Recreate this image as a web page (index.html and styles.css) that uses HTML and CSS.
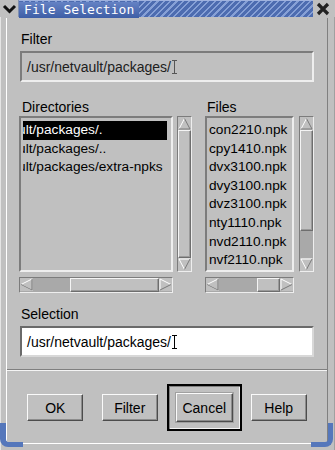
FILE: index.html
```html
<!DOCTYPE html>
<html lang="en">
<head>
    <meta charset="UTF-8">
    <title>File Selection</title>
    <link rel="stylesheet" href="styles.css">
</head>
<body>

    <div class="window">
        <div class="titlebar">
            <div class="tb-menu">
                <svg width="19" height="17" viewBox="0 0 19 17"><polyline points="4,6 9.5,11.5 15,6" fill="none" stroke="#111" stroke-width="3"/></svg>
            </div>
            <div class="tb-title"><span class="tb-text">File Selection</span></div>
            <div class="tb-close">
                <svg width="22" height="17" viewBox="0 0 22 17"><path d="M5,4 L15,14 M15,4 L5,14" stroke="#222" stroke-width="3.2"/></svg>
            </div>
        </div>

        <div class="frame">
            <div class="client">
                <div class="work">
                    <div class="label">Filter</div>
                    <div class="entry entry-filter">/usr/netvault/packages/<span class="ibeam ibeam-dotted"></span></div>

                    <div class="lists">
                        <div class="pane pane-dirs">
                            <div class="label">Directories</div>
                            <div class="pane-grid">
                                <div class="listbox">
                                    <div class="row row-dir selected"><span>/usr/netvault/packages/.</span></div>
                                    <div class="row row-dir"><span>/usr/netvault/packages/..</span></div>
                                    <div class="row row-dir"><span>/usr/netvault/packages/extra-npks</span></div>
                                </div>
                                <div class="vscroll">
                                    <div class="arrow"><svg width="13" height="13" viewBox="0 0 13 13"><polygon points="6.5,1.5 12,12 1,12" fill="#c0c0c0"/><polyline points="1,12 6.5,1.5" stroke="#fff" fill="none"/><polyline points="6.5,1.5 12,12 1,12" stroke="#7a7a7a" fill="none"/></svg></div>
                                    <div class="slider slider-fill"></div>
                                    <div class="arrow"><svg width="13" height="13" viewBox="0 0 13 13"><polygon points="1,1 12,1 6.5,11.5" fill="#c0c0c0"/><polyline points="6.5,11.5 1,1 12,1" stroke="#fff" fill="none"/><polyline points="12,1 6.5,11.5" stroke="#7a7a7a" fill="none"/></svg></div>
                                </div>
                                <div class="hscroll">
                                    <div class="arrow"><svg width="13" height="13" viewBox="0 0 13 13"><polygon points="1,6.5 12,1 12,12" fill="#c0c0c0"/><polyline points="12,12 1,6.5 12,1" stroke="#fff" fill="none"/><polyline points="12,1 12,12 1,6.5" stroke="#7a7a7a" fill="none"/></svg></div>
                                    <div class="trough" style="width: 37px;"></div>
                                    <div class="slider slider-fill"></div>
                                    <div class="arrow"><svg width="13" height="13" viewBox="0 0 13 13"><polygon points="1,1 12,6.5 1,12" fill="#c0c0c0"/><polyline points="1,12 1,1 12,6.5" stroke="#fff" fill="none"/><polyline points="12,6.5 1,12" stroke="#7a7a7a" fill="none"/></svg></div>
                                </div>
                            </div>
                        </div>

                        <div class="pane pane-files">
                            <div class="label">Files</div>
                            <div class="pane-grid">
                                <div class="listbox">
                                    <div class="row">con2210.npk</div>
                                    <div class="row">cpy1410.npk</div>
                                    <div class="row">dvx3100.npk</div>
                                    <div class="row">dvy3100.npk</div>
                                    <div class="row">dvz3100.npk</div>
                                    <div class="row">nty1110.npk</div>
                                    <div class="row">nvd2110.npk</div>
                                    <div class="row">nvf2110.npk</div>
                                </div>
                                <div class="vscroll">
                                    <div class="arrow"><svg width="13" height="13" viewBox="0 0 13 13"><polygon points="6.5,1.5 12,12 1,12" fill="#c0c0c0"/><polyline points="1,12 6.5,1.5" stroke="#fff" fill="none"/><polyline points="6.5,1.5 12,12 1,12" stroke="#7a7a7a" fill="none"/></svg></div>
                                    <div class="slider" style="height: 101px;"></div>
                                    <div class="trough trough-fill"></div>
                                    <div class="arrow"><svg width="13" height="13" viewBox="0 0 13 13"><polygon points="1,1 12,1 6.5,11.5" fill="#c0c0c0"/><polyline points="6.5,11.5 1,1 12,1" stroke="#fff" fill="none"/><polyline points="12,1 6.5,11.5" stroke="#7a7a7a" fill="none"/></svg></div>
                                </div>
                                <div class="hscroll">
                                    <div class="arrow"><svg width="13" height="13" viewBox="0 0 13 13"><polygon points="1,6.5 12,1 12,12" fill="#c0c0c0"/><polyline points="12,12 1,6.5 12,1" stroke="#fff" fill="none"/><polyline points="12,1 12,12 1,6.5" stroke="#7a7a7a" fill="none"/></svg></div>
                                    <div class="trough" style="width: 38px;"></div>
                                    <div class="slider slider-fill"></div>
                                    <div class="arrow"><svg width="13" height="13" viewBox="0 0 13 13"><polygon points="1,1 12,6.5 1,12" fill="#c0c0c0"/><polyline points="1,12 1,1 12,6.5" stroke="#fff" fill="none"/><polyline points="12,6.5 1,12" stroke="#7a7a7a" fill="none"/></svg></div>
                                </div>
                            </div>
                        </div>
                    </div>

                    <div class="label label-selection">Selection</div>
                    <div class="entry entry-selection">/usr/netvault/packages/<span class="ibeam"></span></div>
                </div>

                <div class="separator"></div>

                <div class="buttons">
                    <button class="btn">OK</button>
                    <button class="btn">Filter</button>
                    <div class="default-ring"><button class="btn btn-default">Cancel</button></div>
                    <button class="btn">Help</button>
                </div>
            </div>
        </div>
    </div>

</body>
</html>
```

FILE: styles.css
```css
body {
    margin: 0;
    background-color: #c0c0c0;
    font-family: "Liberation Sans", Arial, sans-serif;
    font-size: 14px;
    color: #000;
}

.window {
    position: relative;
    width: 335px;
    height: 450px;
    background-color: #c0c0c0;
    overflow: hidden;
}

/* corner handles of the window frame */
.window::before, .window::after {
    content: "";
    position: absolute;
    bottom: 3px;
    width: 17px;
    height: 19px;
    border-bottom: 5px solid #5577bb;
}

.window::before {
    left: 0;
    border-left: 6px solid #5577bb;
    border-bottom-left-radius: 8px;
}

.window::after {
    right: 2px;
    border-right: 5px solid #5577bb;
    border-bottom-right-radius: 8px;
}

/* title bar */
.titlebar {
    display: flex;
    height: 17px;
}

.tb-menu {
    width: 19px;
    background-color: #c0c0c0;
    border-right: 1px solid #8090b0;
    box-sizing: border-box;
}

.tb-menu svg, .tb-close svg {
    display: block;
}

.tb-title {
    flex: 1;
    background-color: #4d6cb0;
    background-image: repeating-linear-gradient(135deg, #4d6cb0 0, #4d6cb0 3px, #86a0d6 3px, #86a0d6 4.5px);
    border-top: 1px solid #9fb2de;
    box-sizing: border-box;
}

.tb-text {
    display: inline-block;
    height: 16px;
    padding: 0 5px 0 5px;
    background: linear-gradient(#6582c4, #3e5ea6);
    color: #fff;
    font-family: "DejaVu Sans Mono", monospace;
    font-size: 13px;
    line-height: 16px;
    letter-spacing: 0.05px;
}

.tb-close {
    width: 22px;
    background-color: #c0c0c0;
}

/* frame + client area */
.frame {
    height: 433px;
    box-sizing: border-box;
    padding: 1px 6px 6px 5px;
    border-left: 1px solid #e4e4e4;
    border-right: 1px solid #a0a0a0;
}

.client {
    height: 100%;
    box-sizing: border-box;
    border-left: 1px solid #fff;
    border-bottom: 1px solid #fff;
    border-right: 1px solid #808080;
}

.work {
    padding: 13px 13px 0 13px;
}

.label {
    line-height: 16px;
    padding-left: 1px;
}

.label-selection {
    margin-top: 13px;
}

.entry {
    margin-top: 4px;
    height: 31px;
    box-sizing: border-box;
    border: 2px solid;
    border-color: #7c7c7c #eeeeee #eeeeee #7c7c7c;
    padding-left: 5px;
    display: flex;
    align-items: center;
    white-space: nowrap;
}

.entry-filter {
    background-color: #c0c0c0;
    color: #202020;
}

.entry-selection {
    background-color: #fff;
    border-color: #6a6a6a #d8d8d8 #d8d8d8 #6a6a6a;
}

.ibeam {
    display: inline-block;
    width: 5px;
    height: 14px;
    margin-left: 1px;
    background:
        linear-gradient(#000, #000) center / 1px 100% no-repeat,
        linear-gradient(#000, #000) top / 5px 1px no-repeat,
        linear-gradient(#000, #000) bottom / 5px 1px no-repeat;
}

.ibeam-dotted {
    opacity: 0.55;
}

.lists {
    display: flex;
    margin-top: 17px;
    margin-left: -1px;
}

.pane-dirs {
    width: 173px;
}

.pane-dirs .label {
    padding-left: 3px;
}

.pane-files {
    width: 109px;
    margin-left: 13px;
}

.pane-files .label {
    padding-left: 2px;
}

.pane-grid {
    display: grid;
    grid-template-rows: 156px 16px;
    row-gap: 5px;
    margin-top: 1px;
}

.pane-dirs .pane-grid {
    grid-template-columns: 154px 15px;
    column-gap: 4px;
}

.pane-files .pane-grid {
    grid-template-columns: 89px 15px;
    column-gap: 5px;
}

.listbox {
    box-sizing: border-box;
    border: 2px solid;
    border-color: #7c7c7c #eeeeee #eeeeee #7c7c7c;
    padding: 3px 4px 0 2px;
    overflow: hidden;
}

.row {
    height: 18.6px;
    line-height: 18.6px;
    font-size: 13.7px;
    white-space: nowrap;
    overflow: hidden;
}

.row-dir span {
    margin-left: -65px;
}

.row.selected {
    background-color: #000;
    color: #fff;
}

/* scrollbars */
.vscroll, .hscroll {
    display: flex;
    box-sizing: border-box;
    border: 1px solid;
    border-color: #7c7c7c #eeeeee #eeeeee #7c7c7c;
    background-color: #a9a9a9;
}

.vscroll {
    flex-direction: column;
}

.arrow {
    flex: none;
    width: 13px;
    height: 13px;
    background-color: #c0c0c0;
}

.arrow svg {
    display: block;
}

.slider {
    box-sizing: border-box;
    background-color: #c0c0c0;
    border: 1px solid;
    border-color: #f4f4f4 #6e6e6e #6e6e6e #f4f4f4;
    box-shadow: inset -1px -1px #9a9a9a;
}

.slider-fill {
    flex: 1;
}

.trough {
    flex: none;
}

.trough-fill {
    flex: 1;
}

.separator {
    margin-top: 12px;
    height: 0;
    border-top: 1px solid #808080;
    border-bottom: 1px solid #f4f4f4;
}

/* dialog buttons */
.buttons {
    display: grid;
    grid-template-columns: repeat(4, 74.5px);
    align-items: center;
    justify-items: center;
    padding: 13px 0 0 11px;
}

.btn {
    width: 56px;
    height: 27px;
    margin: 0;
    padding: 0;
    box-sizing: border-box;
    background-color: #c0c0c0;
    border: 1px solid;
    border-color: #fafafa #4c4c4c #4c4c4c #fafafa;
    box-shadow: inset -1px -1px #8c8c8c;
    font-family: "Liberation Sans", Arial, sans-serif;
    font-size: 14px;
    color: #000;
}

.default-ring {
    width: 75px;
    height: 47px;
    box-sizing: border-box;
    border: 2px solid #000;
    box-shadow: inset 1px 1px #808080, inset -1px -1px #f4f4f4;
    display: flex;
    align-items: center;
    justify-content: center;
}

.btn-default {
    width: 57px;
    height: 29px;
    outline: 1px solid #a0a0a0;
}
```
